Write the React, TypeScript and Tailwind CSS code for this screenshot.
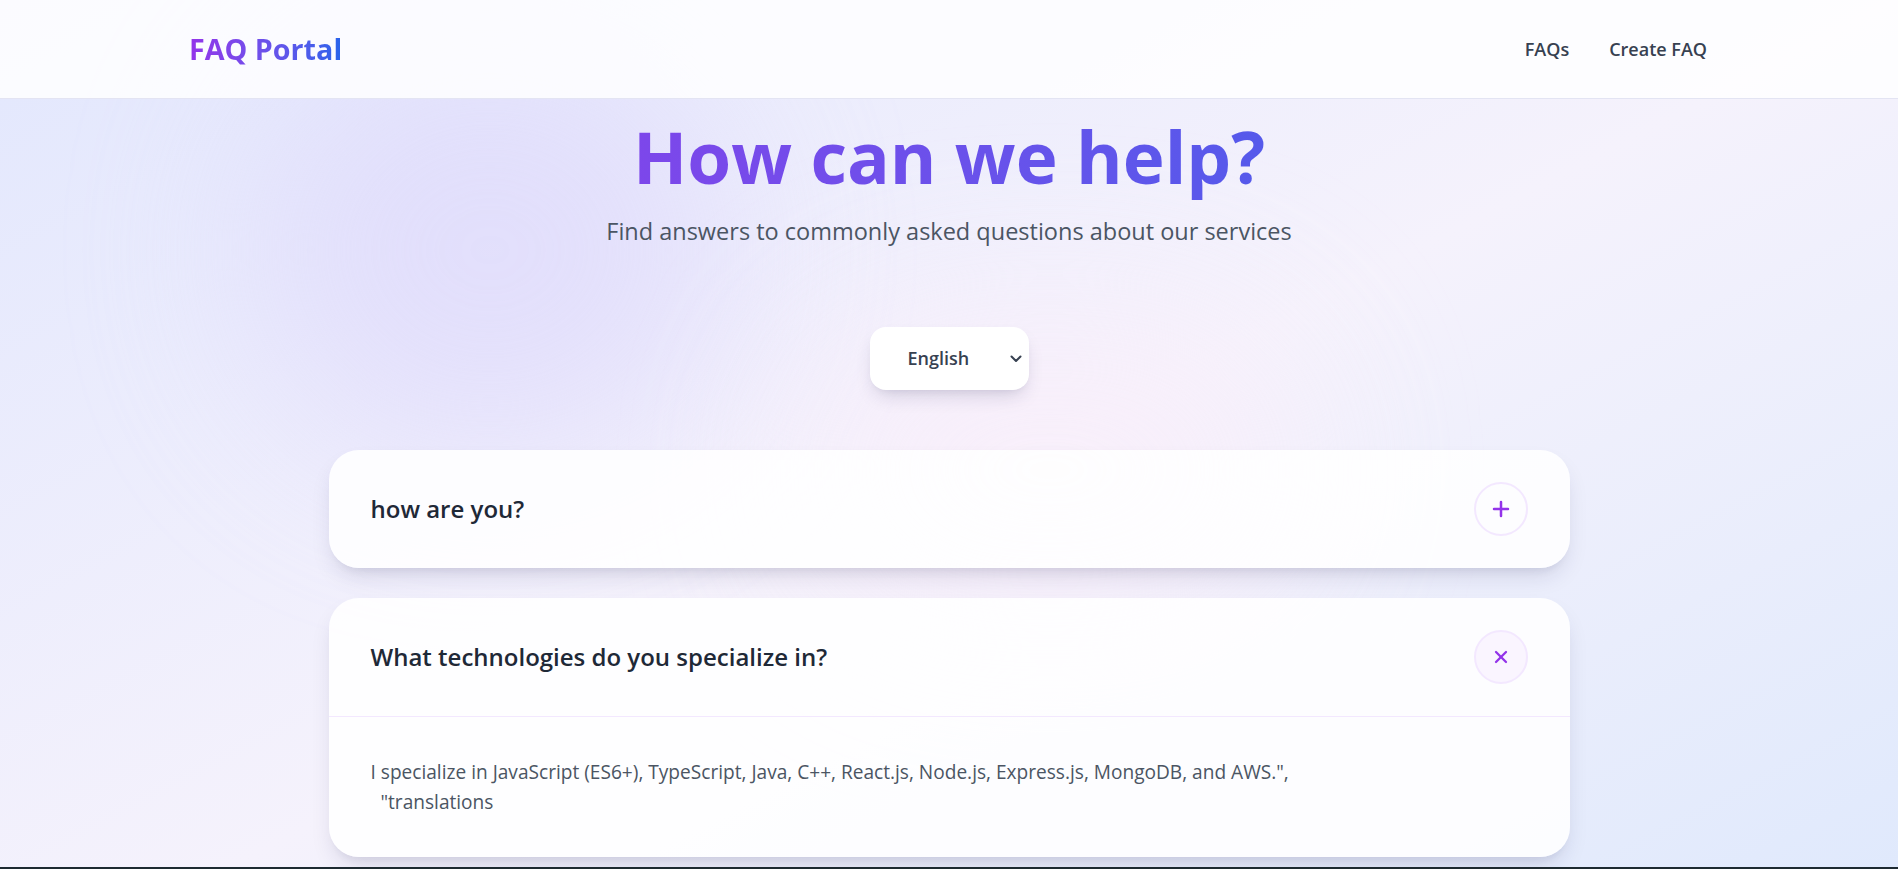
import { useState } from "react";
import { Plus, X } from "lucide-react";

interface Faq {
  id: number;
  question: string;
  answer: string;
}

const faqs: Faq[] = [
  { id: 1, question: "how are you?", answer: "I am fine, thank you for asking!" },
  {
    id: 2,
    question: "What technologies do you specialize in?",
    answer:
      'I specialize in JavaScript (ES6+), TypeScript, Java, C++, React.js, Node.js, Express.js, MongoDB, and AWS.",\n  "translations',
  },
];

function FaqCard({ faq, open, onToggle }: { faq: Faq; open: boolean; onToggle: () => void }) {
  return (
    <div className="bg-white/90 rounded-[30px] shadow-[0_12px_25px_-6px_rgba(30,30,80,0.14),0_8px_10px_-6px_rgba(30,30,80,0.08)] overflow-hidden">
      <button
        onClick={onToggle}
        className="w-full flex items-center justify-between px-[42px] py-8 text-left"
      >
        <span className="text-[24px] font-semibold text-[#1f2937]">{faq.question}</span>
        <span
          className={`w-[54px] h-[54px] rounded-full border-2 border-[#f3e8ff] flex items-center justify-center text-[#9333ea] ${
            open ? "bg-[#faf5ff]" : "bg-transparent"
          }`}
        >
          {open ? <X size={20} strokeWidth={2.75} /> : <Plus size={24} strokeWidth={2.5} />}
        </span>
      </button>

      {open && (
        <div className="border-t border-[#f3e8ff] px-[42px] pt-10 pb-10">
          <p className="text-[19.1px] leading-[30px] text-[#4b5563] whitespace-pre-wrap">{faq.answer}</p>
        </div>
      )}
    </div>
  );
}

export default function App() {
  const [openId, setOpenId] = useState<number | null>(2);
  const [lang, setLang] = useState("en");

  return (
    <div
      className="relative min-h-screen overflow-hidden bg-gradient-to-br from-[#e2e7fd] via-[#f5f2fc] to-[#dde8fc]"
      style={{ fontFamily: '"Open Sans", "Noto Sans", sans-serif' }}
    >
      {/* background blobs */}
      <div className="pointer-events-none absolute left-[250px] top-[40px] w-[480px] h-[420px] rounded-full bg-[#dcd6fb] opacity-60 blur-[90px]" />
      <div className="pointer-events-none absolute left-[800px] top-[320px] w-[500px] h-[300px] rounded-full bg-[#faeefa] opacity-70 blur-[90px]" />

      {/* Header */}
      <header className="relative h-[99px] bg-white/85 border-b border-[#e3e4f3]">
        <div className="max-w-[1520px] mx-auto h-full flex items-center justify-between">
          <span className="text-[28.7px] font-bold bg-gradient-to-r from-[#9333ea] to-[#2563eb] bg-clip-text text-transparent">
            FAQ Portal
          </span>
          <nav className="flex items-center gap-10 pr-[2px]">
            <a className="text-[18px] font-semibold text-[#374151]">FAQs</a>
            <a className="text-[18px] font-semibold text-[#374151]">Create FAQ</a>
          </nav>
        </div>
      </header>

      {/* Hero */}
      <main className="relative">
        <div className="max-w-[1520px] mx-auto text-center">
          <h1 className="mt-[22px] text-[71px] leading-none font-bold bg-gradient-to-r from-[#9333ea] to-[#2563eb] bg-clip-text text-transparent pb-2">
            How can we help?
          </h1>
          <p className="mt-[14px] text-[23.5px] text-[#4b5563]">
            Find answers to commonly asked questions about our services
          </p>
        </div>

        <div className="flex justify-center mt-[78px]">
          <div className="relative w-[159px] h-[63px] rounded-2xl bg-white shadow-[0_10px_20px_-6px_rgba(30,30,80,0.18),0_4px_8px_-4px_rgba(30,30,80,0.08)]">
            <select
              value={lang}
              onChange={(e) => setLang(e.target.value)}
              className="appearance-none w-full h-full bg-transparent rounded-2xl pl-[38px] pr-8 text-[18px] font-semibold text-[#374151] outline-none"
            >
              <option value="en">English</option>
              <option value="hi">Hindi</option>
              <option value="bn">Bengali</option>
            </select>
            <svg
              className="pointer-events-none absolute right-[7px] top-[28px]"
              width="12"
              height="8"
              viewBox="0 0 12 8"
              fill="none"
            >
              <path d="M1.5 1.5l4.5 4.5 4.5-4.5" stroke="#374151" strokeWidth="2" strokeLinecap="round" strokeLinejoin="round" />
            </svg>
          </div>
        </div>

        <div className="w-[1241px] mx-auto mt-[60px] flex flex-col gap-[30px]">
          {faqs.map((f) => (
            <FaqCard
              key={f.id}
              faq={f}
              open={openId === f.id}
              onToggle={() => setOpenId(openId === f.id ? null : f.id)}
            />
          ))}
        </div>
      </main>

      <footer className="relative mt-[10px] h-[120px] bg-[#1d2a31]" />
    </div>
  );
}
